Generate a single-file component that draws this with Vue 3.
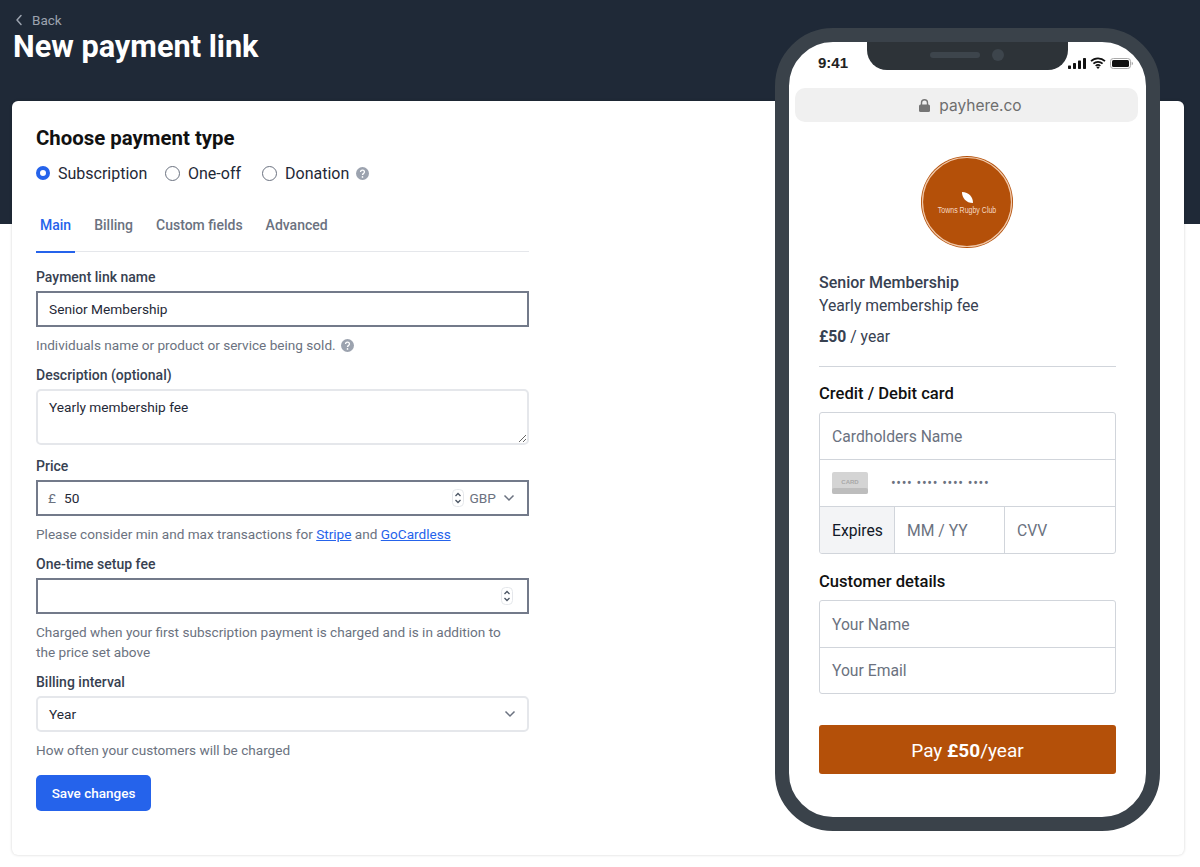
<template>
  <div class="page">
    <header class="top">
      <a class="back">
        <svg width="8" height="12" viewBox="0 0 8 12"><path d="M6 1.500 2 6l4 4.500" fill="none" stroke="#9ca3af" stroke-width="1.500" stroke-linecap="round" stroke-linejoin="round"/></svg>
        <span>Back</span>
      </a>
      <h1>New payment link</h1>
    </header>

    <main class="card">
      <h2>Choose payment type</h2>
      <div class="radios">
        <label v-for="t in types" :key="t.name" class="radio" :style="{ width: t.width + 'px' }">
          <span class="dot" :class="{ on: t.on }"></span>
          <span>{{ t.name }}</span>
          <svg v-if="t.help" class="help" width="13" height="13" viewBox="0 0 20 20"><circle cx="10" cy="10" r="10" fill="#9ca3af"/><path d="M7 7.800c0-4 6-4 6 0 0 2.500-3 2.300-3 4.400" fill="none" stroke="#fff" stroke-width="2"/><circle cx="10" cy="15.300" r="1.300" fill="#fff"/></svg>
        </label>
      </div>

      <nav class="tabs">
        <a v-for="(tab, i) in tabs" :key="tab" :class="{ active: i === 0 }">{{ tab }}</a>
      </nav>

      <form class="form" @submit.prevent>
        <label class="lbl">Payment link name</label>
        <div class="input focus">Senior Membership</div>
        <p class="hint">Individuals name or product or service being sold.
          <svg class="help inl" width="13" height="13" viewBox="0 0 20 20"><circle cx="10" cy="10" r="10" fill="#9ca3af"/><path d="M7 7.800c0-4 6-4 6 0 0 2.500-3 2.300-3 4.400" fill="none" stroke="#fff" stroke-width="2"/><circle cx="10" cy="15.300" r="1.300" fill="#fff"/></svg>
        </p>

        <label class="lbl">Description (optional)</label>
        <textarea class="input area" readonly>Yearly membership fee</textarea>

        <label class="lbl wide">Price</label>
        <div class="input focus price">
          <span class="cur">£</span>
          <span class="val">50</span>
          <svg class="spin" width="12" height="18" viewBox="0 0 12 18"><rect x=".5" y=".5" width="11" height="17" rx="4" fill="#fff" stroke="#e5e7eb"/><path d="M3.500 7 6 4.500 8.500 7M3.500 11 6 13.500 8.500 11" fill="none" stroke="#4b5563" stroke-width="1.300"/></svg>
          <span class="gbp">GBP</span>
          <svg class="chev" width="12" height="8" viewBox="0 0 12 8"><path d="M1.500 1.500 6 6l4.500-4.500" fill="none" stroke="#6b7280" stroke-width="1.500"/></svg>
        </div>
        <p class="hint">Please consider min and max transactions for <a>Stripe</a> and <a>GoCardless</a></p>

        <label class="lbl">One-time setup fee</label>
        <div class="input focus price">
          <span class="val"></span>
          <svg class="spin" width="12" height="18" viewBox="0 0 12 18"><rect x=".5" y=".5" width="11" height="17" rx="4" fill="#fff" stroke="#e5e7eb"/><path d="M3.500 7 6 4.500 8.500 7M3.500 11 6 13.500 8.500 11" fill="none" stroke="#4b5563" stroke-width="1.300"/></svg>
        </div>
        <p class="hint">Charged when your first subscription payment is charged and is in addition to the price set above</p>

        <label class="lbl">Billing interval</label>
        <div class="input select">
          <span>Year</span>
          <svg width="12" height="8" viewBox="0 0 12 8"><path d="M1.500 1.500 6 6l4.500-4.500" fill="none" stroke="#6b7280" stroke-width="1.500"/></svg>
        </div>
        <p class="hint">How often your customers will be charged</p>

        <button class="save">Save changes</button>
      </form>
    </main>

    <aside class="phone">
      <div class="notch"><span class="speaker"></span><span class="camera"></span></div>
      <div class="status">
        <span class="time">9:41</span>
        <span class="icons">
          <svg width="18" height="11" viewBox="0 0 18 11" fill="#111"><rect x="0" y="7.500" width="3" height="3.500" rx=".7"/><rect x="5" y="5" width="3" height="6" rx=".7"/><rect x="10" y="2.500" width="3" height="8.500" rx=".7"/><rect x="15" y="0" width="3" height="11" rx=".7"/></svg>
          <svg width="16" height="12" viewBox="0 0 16 12"><path d="M1 4.200a10 10 0 0 1 14 0M3.400 6.700a6.600 6.600 0 0 1 9.200 0M5.700 9a3.300 3.300 0 0 1 4.600 0" fill="none" stroke="#111" stroke-width="1.700"/><path d="M8 12 6.400 10.300a2.300 2.300 0 0 1 3.200 0Z" fill="#111"/></svg>
          <svg width="23" height="11" viewBox="0 0 23 11"><rect x=".5" y=".5" width="20" height="10" rx="2.800" fill="none" stroke="#aaa"/><rect x="2" y="2" width="17" height="7" rx="1.500" fill="#111"/><path d="M21.700 3.800c.8.300 1.300 1 1.300 1.700s-.5 1.400-1.300 1.700Z" fill="#aaa"/></svg>
        </span>
      </div>
      <div class="url">
        <svg width="11" height="13" viewBox="0 0 11 13"><path d="M2.500 6V3.800a3 3 0 0 1 6 0V6" fill="none" stroke="#757575" stroke-width="1.400"/><rect y="5.500" width="11" height="7.500" rx="1.500" fill="#757575"/></svg>
        <span>payhere.co</span>
      </div>

      <div class="screen">
        <div class="logo">
          <svg width="92" height="92" viewBox="0 0 92 92">
            <circle cx="46" cy="46" r="46" fill="#b45009"/>
            <circle cx="46" cy="46" r="44.500" fill="none" stroke="#f0c8aa" stroke-width="1.200"/>
            <path d="M41 36C48 36 52 41 52 47 45 47 41 42 41 36Z" fill="#fff"/>
            <text transform="translate(46 56.500) scale(.74 1)" text-anchor="middle" font-family="Liberation Sans, sans-serif" font-size="9.500" fill="#f6d9c4">Towns Rugby Club</text>
          </svg>
        </div>

        <div class="prod">Senior Membership</div>
        <div class="desc">Yearly membership fee</div>
        <div class="amount"><b>£50</b> / year</div>
        <hr />

        <h3>Credit / Debit card</h3>
        <div class="box">
          <div class="row ph">Cardholders Name</div>
          <div class="row num">
            <svg width="36" height="22" viewBox="0 0 36 22">
              <rect width="36" height="22" rx="2" fill="#d4d4d4"/>
              <rect y="16" width="36" height="6" rx="2" fill="#bdbdbd"/>
              <text x="18" y="12" text-anchor="middle" font-family="Liberation Sans, sans-serif" font-size="6" font-weight="700" fill="#a8a8a8">CARD</text>
            </svg>
            <span class="dots">•••• •••• •••• ••••</span>
          </div>
          <div class="row exp">
            <span class="expires">Expires</span>
            <span class="ph mm">MM / YY</span>
            <span class="ph cvv">CVV</span>
          </div>
        </div>

        <h3 class="cust">Customer details</h3>
        <div class="box">
          <div class="row ph">Your Name</div>
          <div class="row ph">Your Email</div>
        </div>

        <button class="pay">Pay <b>£50</b>/year</button>
      </div>
    </aside>
  </div>
</template>

<script setup>
const types = [
  { name: 'Subscription', width: 129, on: true },
  { name: 'One-off', width: 97 },
  { name: 'Donation', width: 110, help: true }
]

const tabs = ['Main', 'Billing', 'Custom fields', 'Advanced']
</script>

<style>
body {
  margin: 0;
  background: #fff;
}
</style>

<style scoped>
.page {
  position: relative;
  height: 867px;
  overflow: hidden;
  font-family: Roboto, "Noto Sans", sans-serif;
  font-size: 14px;
  color: #111827;
}

.top {
  height: 224px;
  box-sizing: border-box;
  background: #1f2937;
  padding: 9px 13px 0;
}

.back {
  display: flex;
  align-items: center;
  gap: 9px;
  height: 21px;
  padding-left: 2px;
  color: #9ca3af;
  font-size: 13.500px;
}

h1 {
  margin: 0;
  font-size: 30.700px;
  line-height: 34px;
  font-weight: 700;
  color: #fff;
}

.card {
  margin: -123px 16px 12px 12px;
  height: 754px;
  box-sizing: border-box;
  padding: 24px 24px 0;
  background: #fff;
  border-radius: 6px;
  box-shadow: 0 0 3px rgba(0, 0, 0, 0.18);
}

h2 {
  margin: 0;
  font-size: 20.400px;
  line-height: 26px;
  font-weight: 700;
  color: #111;
}

.radios {
  display: flex;
  margin-top: 10px;
  height: 24px;
  align-items: center;
  font-size: 16px;
  color: #1f2937;
}

.radio {
  display: flex;
  align-items: center;
  gap: 8px;
  flex: none;
}

.dot {
  width: 13px;
  height: 13px;
  border: 1px solid #6b7280;
  border-radius: 50%;
}

.dot.on {
  width: 6px;
  height: 6px;
  border: 4.500px solid #2563eb;
}

.help {
  margin-left: -1px;
}

.tabs {
  display: flex;
  gap: 15px;
  margin-top: 26px;
  width: 493px;
  height: 41px;
  box-sizing: border-box;
  border-bottom: 1px solid #e5e7eb;
  color: #6b7280;
  font-weight: 500;
}

.tabs a {
  padding: 4px 4px 0;
  height: 36px;
  line-height: 20px;
}

.tabs a.active {
  color: #2563eb;
  border-bottom: 2px solid #2563eb;
}

.form {
  display: flex;
  flex-direction: column;
  width: 493px;
  padding-top: 15px;
}

.lbl {
  line-height: 20px;
  font-weight: 500;
  color: #374151;
  margin-bottom: 4px;
}

.lbl.wide {
  margin-top: 11px;
}

.input {
  box-sizing: border-box;
  height: 36px;
  padding: 0 11px;
  line-height: 32px;
  border: 2px solid #e5e7eb;
  border-radius: 5px;
  background: #fff;
  color: #1f2937;
  font: inherit;
  font-size: 13.700px;
}

.input.focus {
  border-color: #737a8a;
  border-radius: 0;
  line-height: 32px;
}

.area {
  display: block;
  height: 56px;
  padding: 5px 11px;
  line-height: 22px;
  resize: vertical;
  outline: none;
}

.price {
  display: flex;
  align-items: center;
  padding-left: 10px;
}

.cur {
  width: 16px;
  color: #6b7280;
}

.val {
  flex: 1;
}

.spin {
  margin-right: 3px;
}

.gbp {
  color: #6b7280;
  margin-left: 3px;
  margin-right: 7px;
}

.chev {
  margin-right: 1px;
}

.select {
  display: flex;
  align-items: center;
  justify-content: space-between;
  line-height: 32px;
}

.hint {
  margin: 8px 0 10px;
  max-width: 480px;
  line-height: 20px;
  font-size: 13.600px;
  color: #6b7280;
}

.hint a {
  color: #2563eb;
  text-decoration: underline;
}

.inl {
  margin-left: 2px;
  vertical-align: -2px;
}

.save {
  align-self: flex-start;
  margin-top: 5px;
  width: 115px;
  height: 36px;
  border: none;
  border-radius: 5px;
  background: #2563eb;
  color: #fff;
  font: inherit;
  font-size: 13.500px;
  font-weight: 500;
}

.phone {
  position: absolute;
  left: 775px;
  top: 28px;
  width: 385px;
  height: 803px;
  box-sizing: border-box;
  border: 14px solid #3a424a;
  border-radius: 58px;
  background: #fff;
}

.notch {
  position: absolute;
  left: 78px;
  top: 0;
  width: 201px;
  height: 28px;
  background: #2d3338;
  border-radius: 0 0 20px 20px;
}

.speaker {
  position: absolute;
  left: 63px;
  top: 10px;
  width: 50px;
  height: 6px;
  border-radius: 3px;
  background: #3d454c;
}

.camera {
  position: absolute;
  left: 125px;
  top: 7px;
  width: 12px;
  height: 12px;
  border-radius: 50%;
  background: #3d454c;
}

.status {
  display: flex;
  justify-content: space-between;
  align-items: center;
  height: 42px;
  padding: 0 13px 0 29px;
  box-sizing: border-box;
}

.time {
  margin-bottom: 2px;
  font-family: "Liberation Sans", sans-serif;
  font-size: 15px;
  font-weight: 700;
  color: #222;
}

.icons {
  display: flex;
  align-items: center;
  gap: 4px;
}

.url {
  display: flex;
  align-items: center;
  justify-content: center;
  gap: 9px;
  margin: 4px 8px 0 6px;
  padding-left: 8px;
  height: 34px;
  border-radius: 10px;
  background: #f0f0f0;
  font-family: "Inter", "Liberation Sans", sans-serif;
  font-size: 15.500px;
  color: #6e6e6e;
}

.screen {
  padding: 34px 30px 0 30px;
  font-size: 15.700px;
}

.logo {
  display: flex;
  justify-content: center;
  height: 92px;
  margin: 0 2px 23px 0;
}

.prod {
  line-height: 23px;
  font-size: 16px;
  font-weight: 500;
  color: #374151;
}

.desc {
  line-height: 24px;
  color: #374151;
}

.amount {
  margin-top: 7px;
  line-height: 24px;
  color: #374151;
}

hr {
  margin: 17px 0 15px;
  border: none;
  border-top: 1px solid #d1d5db;
}

h3 {
  margin: 0 0 6px;
  font-size: 16.600px;
  line-height: 24px;
  font-weight: 500;
  color: #111;
}

.cust {
  margin-top: 16px;
}

.box {
  border: 1px solid #d1d5db;
  border-radius: 3px;
  overflow: hidden;
}

.row {
  height: 46px;
  box-sizing: border-box;
  display: flex;
  align-items: center;
  padding-left: 12px;
  border-top: 1px solid #d1d5db;
}

.row:first-child {
  border-top: none;
}

.ph {
  color: #6b7280;
}

.num {
  height: 47px;
  gap: 23px;
}

.dots {
  font-size: 14px;
  letter-spacing: 0.65px;
  color: #6b7280;
}

.exp {
  height: 47px;
  padding: 0;
  align-items: stretch;
}

.exp span {
  display: flex;
  align-items: center;
  padding-left: 12px;
}

.expires {
  width: 75px;
  box-sizing: border-box;
  background: #f3f4f6;
  border-right: 1px solid #d1d5db;
  color: #111827;
}

.mm {
  width: 110px;
  box-sizing: border-box;
  border-right: 1px solid #d1d5db;
}

.pay {
  display: block;
  width: 100%;
  height: 49px;
  margin-top: 31px;
  padding-top: 2px;
  border: none;
  border-radius: 3px;
  background: #b45009;
  color: #fff;
  font: inherit;
  font-size: 19px;
}
</style>
